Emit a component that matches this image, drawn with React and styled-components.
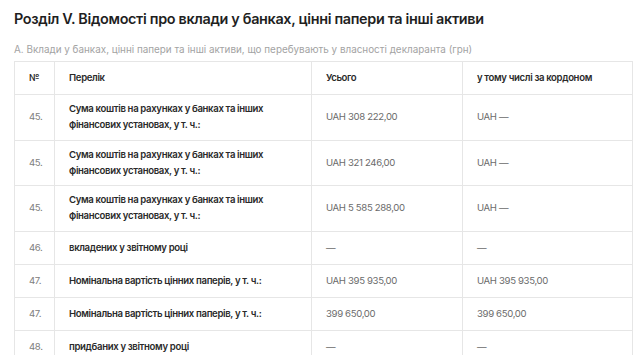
import React from "react";
import styled, { createGlobalStyle } from "styled-components";

const Global = createGlobalStyle`
  html, body { margin: 0; padding: 0; background: #fff; }
  body { font-family: Inter, "Noto Sans", sans-serif; -webkit-font-smoothing: antialiased; }
`;

const Page = styled.div`
  padding: 9px 8px 0 14px;
  width: 640px;
  box-sizing: border-box;
  overflow: hidden;
  height: 355px;
`;

const Title = styled.h2`
  margin: 0;
  font-size: 14.4px;
  line-height: 20px;
  font-weight: 600;
  letter-spacing: -0.33px;
  color: #1f1f1f;
`;

const Subtitle = styled.p`
  margin: 13px 0 5px;
  font-size: 9.9px;
  line-height: 14px;
  color: #a3a3a3;
`;

const Table = styled.table`
  border-collapse: collapse;
  width: 618px;
  table-layout: fixed;
  font-size: 9.6px;
  line-height: 16px;
  letter-spacing: -0.35px;
`;

const Th = styled.th`
  border: 1px solid #e6e6e6;
  padding: 6.25px 14px;
  height: 19.5px;
  text-align: left;
  font-weight: 600;
  color: #2a2a2a;
  vertical-align: middle;
`;

const Td = styled.td`
  border: 1px solid #e6e6e6;
  padding: 6.25px 14px;
  height: 19.5px;
  vertical-align: middle;
  color: ${(p) => (p.$kind === "num" ? "#808080" : p.$kind === "name" ? "#2a2a2a" : "#6b6b6b")};
  font-weight: ${(p) => (p.$kind === "name" ? 600 : 400)};
`;

const rows = [
  ["45.", ["Сума коштів на рахунках у банках та інших", "фінансових установах, у т. ч.:"], "UAH 308 222,00", "UAH —"],
  ["45.", ["Сума коштів на рахунках у банках та інших", "фінансових установах, у т. ч.:"], "UAH 321 246,00", "UAH —"],
  ["45.", ["Сума коштів на рахунках у банках та інших", "фінансових установах, у т. ч.:"], "UAH 5 585 288,00", "UAH —"],
  ["46.", ["вкладених у звітному році"], "—", "—"],
  ["47.", ["Номінальна вартість цінних паперів, у т. ч.:"], "UAH 395 935,00", "UAH 395 935,00"],
  ["47.", ["Номінальна вартість цінних паперів, у т. ч.:"], "399 650,00", "399 650,00"],
  ["48.", ["придбаних у звітному році"], "—", "—"],
];

export default function App() {
  return (
    <Page>
      <Global />
      <Title>Розділ V. Відомості про вклади у банках, цінні папери та інші активи</Title>
      <Subtitle>А. Вклади у банках, цінні папери та інші активи, що перебувають у власності декларанта (грн)</Subtitle>
      <Table>
        <colgroup>
          <col style={{ width: 40 }} />
          <col style={{ width: 257 }} />
          <col style={{ width: 151 }} />
          <col style={{ width: 170 }} />
        </colgroup>
        <thead>
          <tr>
            <Th>№</Th>
            <Th>Перелік</Th>
            <Th>Усього</Th>
            <Th>у тому числі за кордоном</Th>
          </tr>
        </thead>
        <tbody>
          {rows.map((r, i) => (
            <tr key={i}>
              <Td $kind="num">{r[0]}</Td>
              <Td $kind="name">
                {r[1].map((l, j) => (
                  <React.Fragment key={j}>
                    {j > 0 && <br />}
                    {l}
                  </React.Fragment>
                ))}
              </Td>
              <Td>{r[2]}</Td>
              <Td>{r[3]}</Td>
            </tr>
          ))}
        </tbody>
      </Table>
    </Page>
  );
}
